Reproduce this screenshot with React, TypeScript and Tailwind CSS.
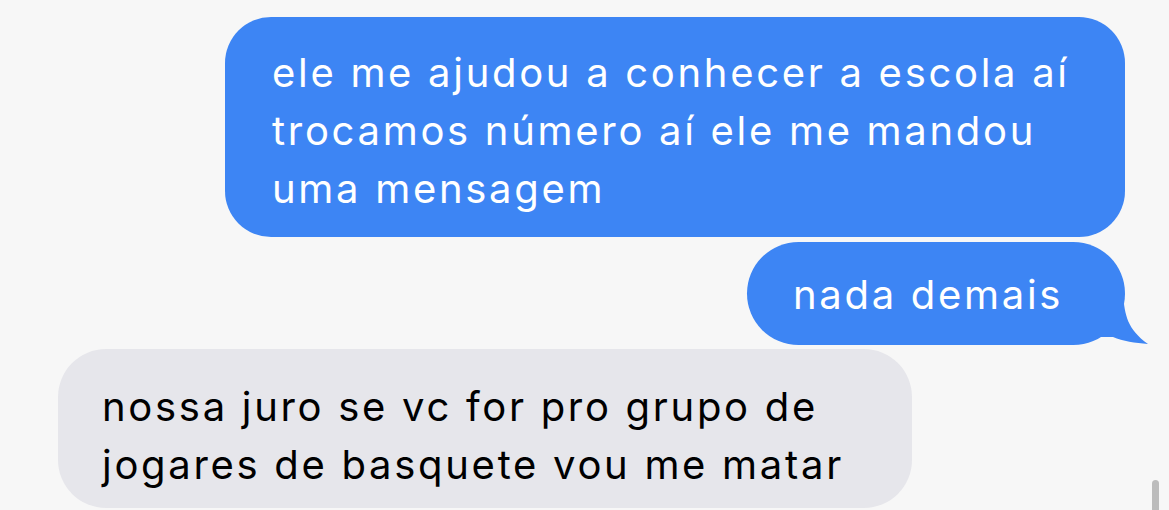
export default function App() {
  return (
    <div className="relative flex h-[510px] w-full flex-col overflow-hidden bg-[#f7f7f7] pt-[17px] font-['Inter','Liberation_Sans',sans-serif] text-[40px] leading-[58px] tracking-[2.7px]">
      <div className="mr-[44px] w-[900px] self-end rounded-[46px] bg-[#3d85f4] pb-[19px] pl-[47px] pr-[40px] pt-[27px] text-white">
        ele me ajudou a conhecer a escola aí trocamos número aí ele me mandou uma mensagem
      </div>

      <div className="relative mr-[44px] mt-[5px] w-[378px] self-end rounded-[52px] bg-[#3d85f4] pb-[21px] pl-[46px] pt-[24px] text-white">
        nada demais
        <svg
          className="absolute -right-[24px] bottom-0"
          width="48"
          height="50"
          viewBox="0 0 48 50"
          aria-hidden
        >
          <path
            d="M22 0 C24 20 26 34 47 49 C34 48 22 46 12 42 L0 42 L0 0 Z"
            fill="#3d85f4"
          />
        </svg>
      </div>

      <div className="ml-[58px] mt-[4px] w-[854px] self-start rounded-[48px] bg-[#e6e6eb] pb-[14px] pl-[44px] pr-[40px] pt-[29px] text-black">
        nossa juro se vc for pro grupo de jogares de basquete vou me matar
      </div>

      <div className="absolute bottom-0 right-[10px] h-[30px] w-[7px] rounded-t-full bg-[#bcbcbc]" />
    </div>
  );
}
